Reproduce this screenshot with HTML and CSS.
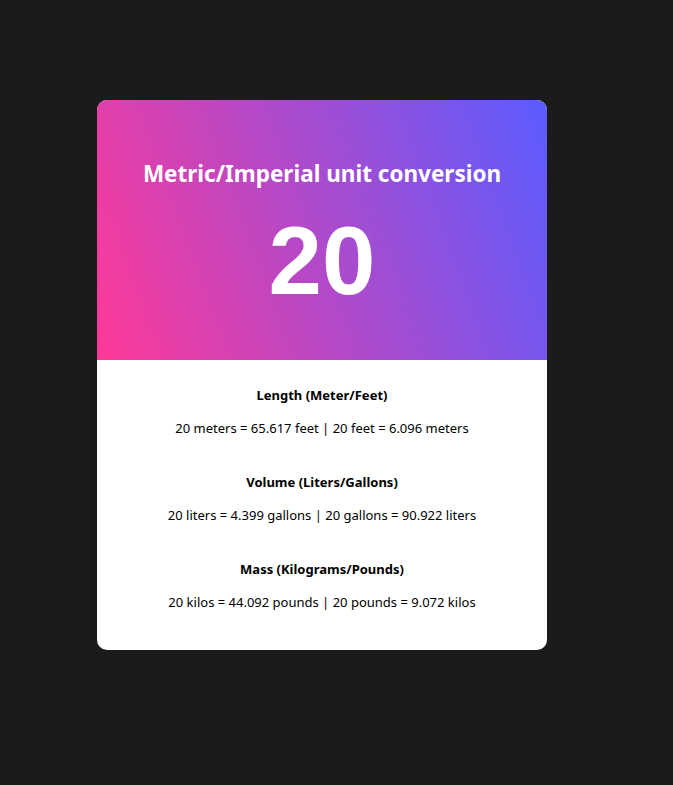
FILE: index.html
```html
<!DOCTYPE html>
<html lang="en">
<head>
    <meta charset="UTF-8">
    <meta name="viewport" content="width=device-width, initial-scale=1.0">
    <title>Unit Converter</title>
    <link rel="stylesheet" href="styles.css">
</head>
<body>

    <div class="page">
        <div class="card">
            <div class="card-top">
                <h1 class="title">Metric/Imperial unit conversion</h1>
                <div class="number">20</div>
            </div>
            <div class="card-body">
                <div class="conversion">
                    <h2 class="conv-title">Length (Meter/Feet)</h2>
                    <p class="conv-text">20 meters = 65.617 feet | 20 feet = 6.096 meters</p>
                </div>
                <div class="conversion">
                    <h2 class="conv-title">Volume (Liters/Gallons)</h2>
                    <p class="conv-text">20 liters = 4.399 gallons | 20 gallons = 90.922 liters</p>
                </div>
                <div class="conversion">
                    <h2 class="conv-title">Mass (Kilograms/Pounds)</h2>
                    <p class="conv-text">20 kilos = 44.092 pounds | 20 pounds = 9.072 kilos</p>
                </div>
            </div>
        </div>
    </div>

</body>
</html>
```

FILE: styles.css
```css
body {
    margin: 0;
    padding: 0;
    background-color: #1b1b1b;
    font-family: 'Noto Sans', sans-serif;
}

.page {
    padding-top: 100px;
    padding-left: 97px;
}

.card {
    width: 450px;
    height: 550px;
    border-radius: 10px;
    overflow: hidden;
    background-color: #fff;
}

.card-top {
    height: 260px;
    box-sizing: border-box;
    padding-top: 58px;
    text-align: center;
    color: #fff;
    background: linear-gradient(70deg, #ff3998, #5b5cff);
}

.title {
    margin: 0;
    font-size: 22.5px;
    font-weight: bold;
}

.number {
    margin-top: 24px;
    font-family: 'Liberation Sans', Arial, sans-serif;
    font-size: 96px;
    font-weight: bold;
    line-height: 1;
}

.card-body {
    padding-top: 20px;
    text-align: center;
}

.conversion {
    margin-bottom: 26px;
}

.conv-title {
    margin: 0;
    font-size: 13px;
    font-weight: bold;
    line-height: 30px;
}

.conv-text {
    margin: 5px 0 0;
    font-size: 13px;
    line-height: 26px;
}
```
